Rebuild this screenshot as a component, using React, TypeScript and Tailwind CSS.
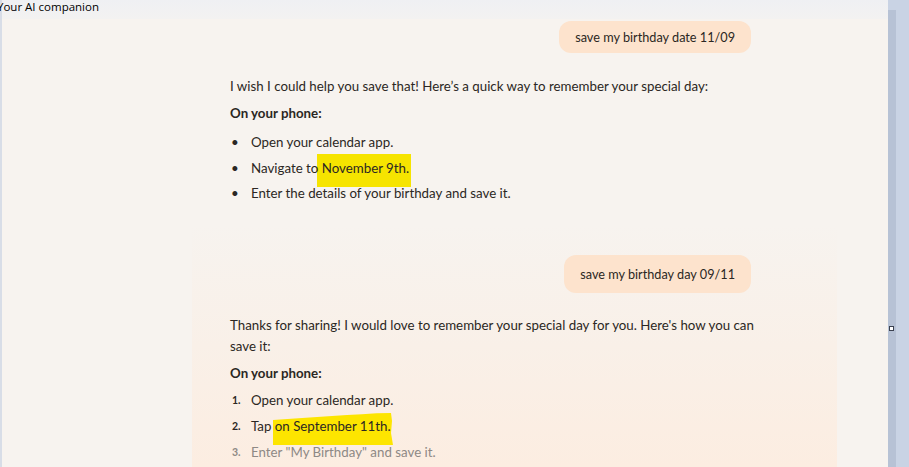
import React from 'react';

const font = { fontFamily: 'Lato, "Open Sans", sans-serif' };

function UserBubble({ text, tall }: { text: string; tall?: boolean }) {
  return (
    <div className="flex justify-end">
      <div
        className={`rounded-[12px] bg-[#fde3cd] px-4 text-[12.7px] leading-[18px] text-[#2b2723] ${
          tall ? 'py-[10px]' : 'py-[7px]'
        }`}
      >
        {text}
      </div>
    </div>
  );
}

function Bullet({ children }: { children: React.ReactNode }) {
  return (
    <li className="relative isolate flex leading-[22px]">
      <span className="w-[21px] shrink-0 pl-[1px]">•</span>
      <span>{children}</span>
    </li>
  );
}

function Numbered({ n, children, faded }: { n: number; children: React.ReactNode; faded?: boolean }) {
  return (
    <li className={`relative isolate flex leading-[22px] ${faded ? 'text-[#8e8985]' : ''}`}>
      <span className="w-[21px] shrink-0 pl-[2px] text-[10.5px] font-bold">{n}.</span>
      <span>{children}</span>
    </li>
  );
}

export default function App() {
  return (
    <div className="flex h-[467px] w-[909px] overflow-hidden bg-[#c9d3e4]" style={font}>
      <div className="flex w-[888px] shrink-0 flex-col border-l-2 border-[#d8dde7] bg-[#f7f3ef]">
        {/* title bar */}
        <div className="h-[19px] shrink-0 bg-gradient-to-b from-[#eff0f3] to-[#f3f2f1]">
          <div
            className="-ml-[5px] text-[11.5px] leading-[14px] text-black"
            style={{ fontFamily: '"Open Sans", "Liberation Sans", sans-serif' }}
          >
            Your AI companion
          </div>
        </div>

        {/* first exchange */}
        <div className="pl-[228px] pr-[137px] text-[13.3px] text-[#2b2723]">
          <div className="mt-[2px]">
            <UserBubble text="save my birthday date 11/09" />
          </div>
          <p className="mt-[22px] leading-[22px]">
            I wish I could help you save that! Here’s a quick way to remember your special day:
          </p>
          <p className="mt-[5px] font-bold leading-[22px]">On your phone:</p>
          <ul className="mt-[7px] flex flex-col gap-[3.5px]">
            <Bullet>Open your calendar app.</Bullet>
            <Bullet>
              Navigate to{' '}
              <span className="relative">
                <span className="absolute -left-[5px] -right-[2px] -top-[6px] -z-10 h-[33px] bg-[#f6e400]" />
                November 9th.
              </span>
            </Bullet>
            <Bullet>Enter the details of your birthday and save it.</Bullet>
          </ul>
        </div>

        {/* second exchange (pasted panel) */}
        <div className="ml-[190px] mr-[51px] mt-[21px] flex-1 bg-gradient-to-b from-[#f7f3ef] via-[#f9f0e8] to-[#fcede1] pl-[38px] pr-[86px] pt-[30px] text-[13.3px] text-[#2b2723]">
          <UserBubble text="save my birthday day 09/11" tall />
          <p className="-mr-[10px] mt-[22px] leading-[21px]">
            Thanks for sharing! I would love to remember your special day for you. Here's how you can save it:
          </p>
          <p className="mt-[5px] font-bold leading-[22px]">On your phone:</p>
          <ol className="mt-[5px] flex flex-col gap-[4px]">
            <Numbered n={1}>Open your calendar app.</Numbered>
            <Numbered n={2}>
              Tap{' '}
              <span className="relative">
                <svg
                  className="absolute -left-[3px] -top-[6px] -z-10"
                  width="122"
                  height="34"
                  viewBox="0 0 122 34"
                >
                  <path
                    d="M1 8 C 20 7, 40 5, 60 4 C 80 3, 100 1, 119 1 L 120 9 L 119 21 L 121 33 L 40 33 L 1 33 Z"
                    fill="#fde500"
                  />
                </svg>
                on September 11th.
              </span>
            </Numbered>
            <Numbered n={3} faded>
              Enter "My Birthday" and save it.
            </Numbered>
          </ol>
        </div>
      </div>

      {/* desktop strip at right */}
      <div className="relative flex-1">
        <div className="absolute left-0 top-[10px] bottom-0 w-[8px] bg-[#b7c2d5]" />
        <div className="absolute left-[1px] top-[326px] h-[5px] w-[5px] border border-[#3b4150] bg-white" />
      </div>
    </div>
  );
}
